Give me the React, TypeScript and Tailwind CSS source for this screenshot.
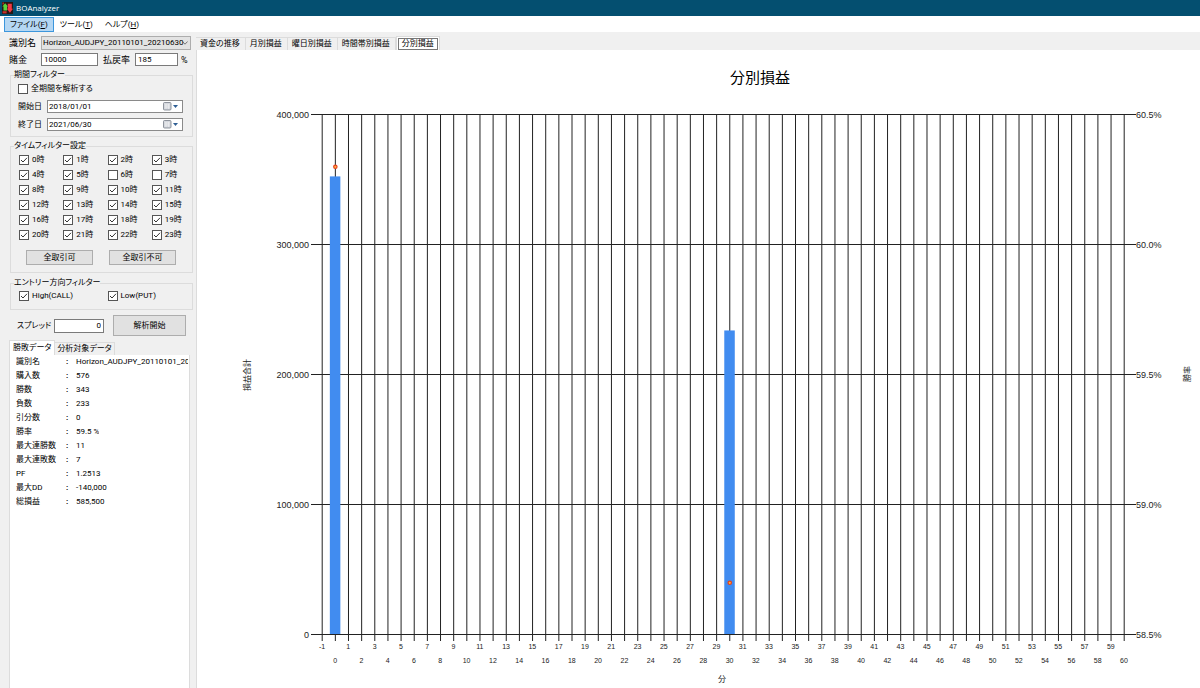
import React, { useState } from 'react';

const UI_FONT = "font-['Roboto','Noto_Sans_CJK_JP',sans-serif] [font-feature-settings:'palt']";

const MENUS = [
  { label: 'ファイル', key: 'F', active: true },
  { label: 'ツール', key: 'T', active: false },
  { label: 'ヘルプ', key: 'H', active: false },
];

const STATS: [string, string][] = [
  ['識別名', 'Horizon_AUDJPY_20110101_20210630'],
  ['購入数', '576'],
  ['勝数', '343'],
  ['負数', '233'],
  ['引分数', '0'],
  ['勝率', '59.5 %'],
  ['最大連勝数', '11'],
  ['最大連敗数', '7'],
  ['PF', '1.2513'],
  ['最大DD', '-140,000'],
  ['総損益', '585,500'],
];

const CHART_TABS = ['資金の推移', '月別損益', '曜日別損益', '時間帯別損益', '分別損益'];

const HOURS = Array.from({ length: 24 }, (_, hour) => hour);
const CLOSED_HOURS = [6, 7];

function AppIcon() {
  return (
    <svg viewBox="0 0 11 12" className="h-3 w-[11px]" aria-hidden="true">
      <rect width="11" height="12" fill="#2a1712" />
      <path d="M3.200 1.200 6 4.400H5V8.600H1.500V4.400H.3Z" fill="#5ad43c" />
      <path d="M5.800 1.800H9.800V6.800H11L7.900 10.800 4.900 6.800H5.800Z" fill="#f23a46" />
      <path d="M.6 9.200h4v2.200h-4z" fill="#c9302a" />
      <path d="M.4.4h1.600v2H.4z" fill="#a83226" />
    </svg>
  );
}

function CheckBox({ label, checked = true }: { label: string; checked?: boolean }) {
  return (
    <label className="flex items-center gap-[3px] whitespace-nowrap leading-[10px]">
      <span className="grid size-[10px] shrink-0">
        <input
          type="checkbox"
          defaultChecked={checked}
          className="peer col-start-1 row-start-1 size-[10px] appearance-none border border-[#555] bg-white"
        />
        <svg
          viewBox="0 0 10 10"
          className="pointer-events-none invisible col-start-1 row-start-1 size-[10px] peer-checked:visible"
          aria-hidden="true"
        >
          <path d="M2 5 4 7 8 2.800" fill="none" stroke="#333" strokeWidth="1" />
        </svg>
      </span>
      {label}
    </label>
  );
}

function DateField({ id, label, value }: { id: string; label: string; value: string }) {
  return (
    <div className="flex items-center">
      <label htmlFor={id} className="w-[29px] shrink-0">
        {label}
      </label>
      <div className="flex h-[13px] flex-1 items-center border border-[#8a8a8a] bg-white pr-1">
        <input id={id} defaultValue={value} className="h-full w-0 flex-1 bg-transparent pl-px outline-none" />
        <button type="button" aria-label={`${label}を選択`} className="flex items-center gap-px">
          <svg viewBox="0 0 9 9" className="size-[9px]" aria-hidden="true">
            <rect x="0.5" y="0.5" width="7.5" height="7.5" rx="1" fill="#d5d8de" stroke="#777d88" strokeWidth="0.8" />
            <path d="M2 3h5M2 5h5M3 2v5M5.500 2v5" stroke="#f4f5f7" strokeWidth="0.5" />
          </svg>
          <svg viewBox="0 0 5 3" className="h-[3px] w-[5px]" aria-hidden="true">
            <path d="M0 0h5L2.500 3z" fill="#2f5f94" />
          </svg>
        </button>
      </div>
    </div>
  );
}

function GroupBox({ title, children, className }: { title: string; children: React.ReactNode; className: string }) {
  return (
    <fieldset className={`ml-[10px] border border-[#dcdcdc] pl-[7px] ${className}`}>
      <legend className="-ml-1 leading-[10px]">{title}</legend>
      {children}
    </fieldset>
  );
}

function PushButton({ children, className }: { children: string; className: string }) {
  return (
    <button type="button" className={`border border-[#adadad] bg-[#e1e1e1] text-center ${className}`}>
      {children}
    </button>
  );
}

function Sidebar() {
  const [tab, setTab] = useState(0);
  return (
    <aside className="flex w-[193px] shrink-0 flex-col pt-1 leading-3">
      <div className="flex h-[14px] items-center pl-[9px] pr-[2px]">
        <label htmlFor="dataset" className="w-8 shrink-0 text-[9px]">
          識別名
        </label>
        <div className="grid h-[14px] flex-1">
          <select
            id="dataset"
            className="col-start-1 row-start-1 h-[14px] w-full appearance-none border border-[#adadad] bg-[#e3e3e3] pl-px"
          >
            <option>Horizon_AUDJPY_20110101_20210630</option>
          </select>
          <svg
            viewBox="0 0 6 4"
            className="pointer-events-none col-start-1 row-start-1 mr-[3px] h-1 w-[6px] self-center justify-self-end"
            aria-hidden="true"
          >
            <path d="M.4.5 3 3.200 5.600.5" fill="none" stroke="#555" strokeWidth="0.8" />
          </svg>
        </div>
      </div>

      <div className="mt-[3px] flex h-[13px] items-center pl-[9px]">
        <label htmlFor="stake" className="w-8 shrink-0 text-[9px]">
          賭金
        </label>
        <input id="stake" defaultValue="10000" className="h-[13px] w-[57px] border border-[#7a7a7a] bg-white px-[2px]" />
        <label htmlFor="payout" className="ml-[5px] w-8 shrink-0 text-[9px]">
          払戻率
        </label>
        <input id="payout" defaultValue="185" className="h-[13px] w-[43px] border border-[#7a7a7a] bg-white px-[2px]" />
        <span className="ml-[3px] text-[9px]">%</span>
      </div>

      <GroupBox title="期間フィルター" className="mt-1 h-[67px] pr-[9px]">
        <div className="mt-1">
          <CheckBox label="全期間を解析する" checked={false} />
        </div>
        <div className="mt-[6px] flex flex-col gap-[5px]">
          <DateField id="from" label="開始日" value="2018/01/01" />
          <DateField id="to" label="終了日" value="2021/06/30" />
        </div>
      </GroupBox>

      <GroupBox title="タイムフィルター設定" className="mt-1 h-[132px]">
        <div className="-mr-1 mt-1 grid grid-cols-4 gap-y-[5px] pl-px">
          {HOURS.map((hour) => (
            <CheckBox key={hour} label={`${hour}時`} checked={!CLOSED_HOURS.includes(hour)} />
          ))}
        </div>
        <div className="mt-[10px] flex gap-4 pl-2">
          <PushButton className="h-[15px] w-[67px]">全取引可</PushButton>
          <PushButton className="h-[15px] w-[67px]">全取引不可</PushButton>
        </div>
      </GroupBox>

      <GroupBox title="エントリー方向フィルター" className="mt-[5px] h-8">
        <div className="-mr-1 mt-[3px] grid grid-cols-2 pl-px">
          <CheckBox label="High(CALL)" />
          <CheckBox label="Low(PUT)" />
        </div>
      </GroupBox>

      <div className="mt-[5px] flex h-[21px] shrink-0 items-center pl-[17px]">
        <label htmlFor="spread" className="w-[37px] shrink-0 whitespace-nowrap">
          スプレッド
        </label>
        <input
          id="spread"
          defaultValue="0"
          className="h-[14px] w-[50px] border border-[#7a7a7a] bg-white px-[2px] text-right"
        />
        <PushButton className="ml-[9px] h-[21px] w-[73px]">解析開始</PushButton>
      </div>

      <div role="tablist" className="mt-1 flex items-end pl-[9px]">
        {['勝敗データ', '分析対象データ'].map((name, index) => (
          <button
            key={name}
            type="button"
            role="tab"
            aria-selected={tab === index}
            onClick={() => setTab(index)}
            className={
              tab === index
                ? 'h-[15px] border border-b-0 border-[#dcdcdc] bg-white px-[3px]'
                : 'h-[13px] border border-b-0 border-l-0 border-[#dcdcdc] bg-[#f0f0f0] px-[2px]'
            }
          >
            {name}
          </button>
        ))}
      </div>
      <div role="tabpanel" className="ml-[9px] mr-[3px] min-h-0 flex-1 overflow-hidden border-x border-[#dcdcdc] bg-white pl-[6px]">
        <dl>
          {STATS.map(([name, value]) => (
            <div key={name} className="flex overflow-hidden leading-[14px]">
              <dt className="w-[50px] shrink-0 whitespace-nowrap">{name}</dt>
              <dd className="mr-px flex min-w-0 overflow-hidden whitespace-nowrap">
                <span className="w-[10px] shrink-0 font-bold">:</span>
                {value}
              </dd>
            </div>
          ))}
        </dl>
      </div>
    </aside>
  );
}

const PLOT = { left: 125, right: 927, top: 64, bottom: 584 };
const MINUTES = Array.from({ length: 62 }, (_, i) => i - 1);
const MONEY_AXIS = ['400,000', '300,000', '200,000', '100,000', '0'];
const RATE_AXIS = ['60.5%', '60.0%', '59.5%', '59.0%', '58.5%'];
const BARS = [
  { minute: 0, profit: 352000, rate: 60.3 },
  { minute: 30, profit: 233500, rate: 58.7 },
];

const minuteX = (minute: number) => PLOT.left + ((minute + 1) * (PLOT.right - PLOT.left)) / 61;
const profitY = (profit: number) => PLOT.bottom - (profit / 400000) * (PLOT.bottom - PLOT.top);
const rateY = (rate: number) => PLOT.bottom - ((rate - 58.5) / 2) * (PLOT.bottom - PLOT.top);

function MinuteChart() {
  return (
    <svg
      viewBox="0 0 1003 638"
      className="block h-full w-full font-['Liberation_Sans','Noto_Sans_CJK_JP',sans-serif]"
      role="img"
      aria-label="分別損益"
      fill="#222"
    >
      <text x="563" y="33" textAnchor="middle" fontSize="15" fill="#000">
        分別損益
      </text>
      {MINUTES.map((minute) => (
        <line
          key={minute}
          x1={minuteX(minute) + 0.2}
          x2={minuteX(minute) + 0.2}
          y1={PLOT.top}
          y2={PLOT.bottom + 7}
          stroke="#222"
        />
      ))}
      {MONEY_AXIS.map((label, i) => {
        const y = PLOT.top + i * 130 + 0.5;
        return (
          <g key={label}>
            <line x1="114" x2="939" y1={y} y2={y} stroke="#222" />
            <text x="112" y={y + 3} textAnchor="end" fontSize="9">
              {label}
            </text>
            <text x="939" y={y + 3} fontSize="9">
              {RATE_AXIS[i]}
            </text>
          </g>
        );
      })}
      {BARS.map(({ minute, profit, rate }) => (
        <g key={minute}>
          <rect
            x={minuteX(minute) - 5.3}
            y={profitY(profit)}
            width="10.5"
            height={PLOT.bottom - profitY(profit)}
            fill="#418cf0"
          />
          <circle cx={minuteX(minute) + 0.2} cy={rateY(rate) + 0.8} r="1.7" fill="#fcb441" stroke="#e8401c" strokeWidth="1.2" />
        </g>
      ))}
      {MINUTES.map((minute) => (
        <text
          key={minute}
          x={minuteX(minute)}
          y={minute % 2 === 0 ? 613 : 599}
          textAnchor="middle"
          fontSize="7"
        >
          {minute}
        </text>
      ))}
      <text x="525" y="632" textAnchor="middle" fontSize="8">
        分
      </text>
      <text transform="translate(53 325) rotate(-90)" textAnchor="middle" fontSize="8">
        損益合計
      </text>
      <text transform="translate(993 324) rotate(-90)" textAnchor="middle" fontSize="8">
        勝率
      </text>
    </svg>
  );
}

export default function App() {
  const [chart, setChart] = useState(4);
  return (
    <div className={`flex h-screen flex-col overflow-hidden bg-[#f0f0f0] text-[8px] text-black ${UI_FONT}`}>
      <header className="flex h-4 shrink-0 items-center gap-[3px] bg-[#044f70] pl-[2px] font-['Open_Sans',sans-serif] text-[8px] text-white">
        <AppIcon />
        <h1>BOAnalyzer</h1>
      </header>
      <nav className="flex h-4 shrink-0 items-end bg-white pl-1">
        {MENUS.map(({ label, key, active }) => (
          <button
            key={key}
            type="button"
            className={
              active
                ? 'h-[15px] border border-[#3c96dc] bg-[#b5d7f3] px-[5px] leading-3'
                : 'h-[15px] border border-transparent px-[5px] leading-3'
            }
          >
            {label}(<u>{key}</u>)
          </button>
        ))}
      </nav>
      <div className="flex min-h-0 flex-1">
        <Sidebar />
        <main className="ml-[3px] flex min-w-0 flex-1 flex-col pt-1">
          <div role="tablist" className="flex h-[14px] shrink-0 items-end leading-[10px]">
            {CHART_TABS.map((name, index) => (
              <button
                key={name}
                type="button"
                role="tab"
                aria-selected={chart === index}
                onClick={() => setChart(index)}
                className={
                  chart === index
                    ? 'h-[14px] border border-b-0 border-[#dcdcdc] bg-white p-px'
                    : 'h-[13px] border-r border-t border-[#dcdcdc] pl-1 pr-[5px]'
                }
              >
                {chart === index ? <span className="block border border-[#777] px-[3px]">{name}</span> : name}
              </button>
            ))}
          </div>
          <div role="tabpanel" className="min-h-0 flex-1 border-l border-[#dcdcdc] bg-white">
            <MinuteChart />
          </div>
        </main>
      </div>
    </div>
  );
}
